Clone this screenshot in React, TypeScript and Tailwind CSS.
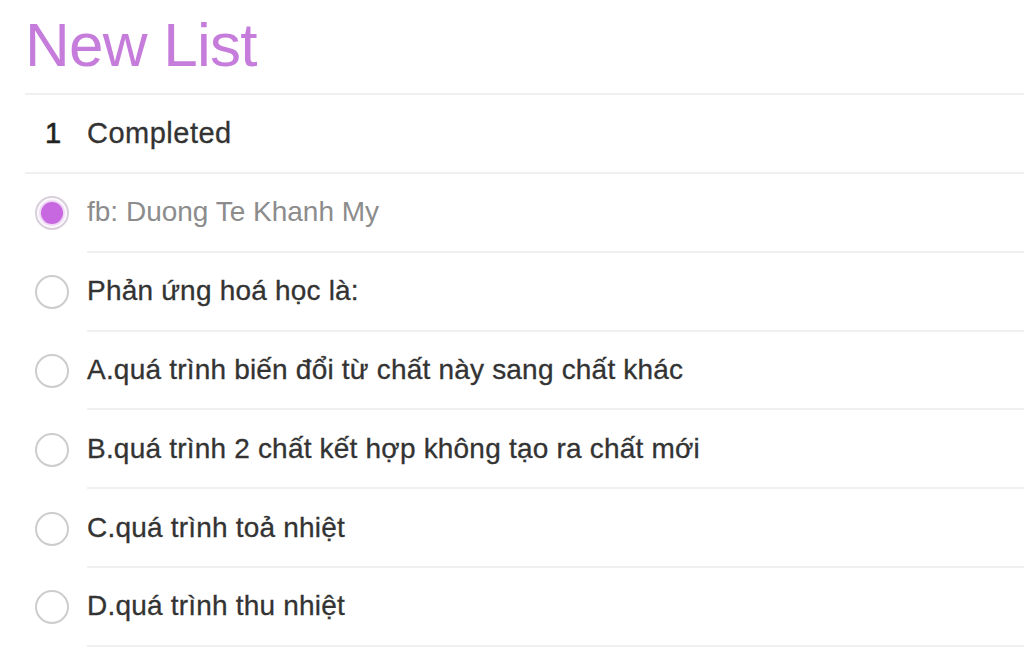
const items = [
  { text: "fb: Duong Te Khanh My", done: true },
  { text: "Phản ứng hoá học là:", done: false },
  { text: "A.quá trình biến đổi từ chất này sang chất khác", done: false },
  { text: "B.quá trình 2 chất kết hợp không tạo ra chất mới", done: false },
  { text: "C.quá trình toả nhiệt", done: false },
  { text: "D.quá trình thu nhiệt", done: false },
];

function Radio({ checked }: { checked: boolean }) {
  if (checked) {
    return (
      <div className="w-[34px] h-[34px] rounded-full border-2 border-[#d9cfdc] flex items-center justify-center shrink-0">
        <div className="w-[22px] h-[22px] rounded-full bg-[#c868e0] shadow-[0_0_2px_2px_#ecd2f3]" />
      </div>
    );
  }
  return <div className="w-[34px] h-[34px] rounded-full border-2 border-[#cdcdcd] shrink-0" />;
}

export default function App() {
  return (
    <div
      className="h-[654px] overflow-hidden bg-white pl-[25px]"
      style={{ fontFamily: '"Liberation Sans", Arial, sans-serif' }}
    >
      <div className="h-[95px] border-b-2 border-[#f0f0f0] pt-[14px]">
        <h1 className="text-[62px] leading-none text-[#c57cdb] tracking-[-0.75px]">New List</h1>
      </div>

      <div className="h-[79px] flex items-center border-b-2 border-[#f0f0f0] text-[29px]">
        <span className="ml-[20px] w-[42px] text-[#222] [-webkit-text-stroke:0.6px_#222]">1</span>
        <span className="text-[#333] tracking-[0.5px] [-webkit-text-stroke:0.3px_#333]">Completed</span>
      </div>

      {items.map((item) => (
        <div key={item.text} className="h-[78.8px] flex items-center">
          <div className="ml-[10px]">
            <Radio checked={item.done} />
          </div>
          <div
            className={
              "ml-[18px] flex-1 h-full flex items-center border-b-2 border-[#f0f0f0] text-[28px] " +
              (item.done
                ? "text-[#8c8c8c] tracking-[0px]"
                : "text-[#333] tracking-[0.2px] [-webkit-text-stroke:0.3px_#333]")
            }
          >
            {item.text}
          </div>
        </div>
      ))}
    </div>
  );
}
